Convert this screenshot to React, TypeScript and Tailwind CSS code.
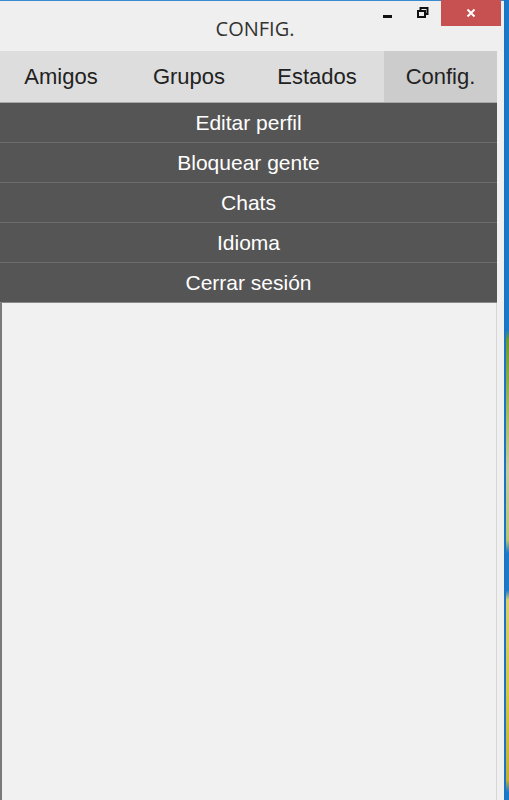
import React from 'react';

const tabs = ['Amigos', 'Grupos', 'Estados', 'Config.'];
const items = ['Editar perfil', 'Bloquear gente', 'Chats', 'Idioma', 'Cerrar sesión'];

const TitleBar: React.FC = () => {
  return (
    <div className="relative h-[51px] bg-[#efefef] border-t border-[#3a8ad0]">
      <div className="pt-[15px] text-center text-[20px] text-[#333] font-['Open_Sans',sans-serif] leading-[26px] pl-[6px]">
        CONFIG.
      </div>
      {/* window buttons */}
      <div className="absolute top-[-1px] right-[3px] flex items-start">
        <div className="w-[36px] h-[25px] flex items-center justify-center pt-[8px]">
          <div className="w-[9px] h-[3px] bg-[#111]" />
        </div>
        <div className="w-[36px] h-[25px] flex items-center justify-center">
          <svg width="12" height="11" viewBox="0 0 12 11">
            <rect x="3.5" y="1" width="7" height="6" fill="none" stroke="#111" strokeWidth="2" />
            <rect x="1" y="4" width="7" height="6" fill="#efefef" stroke="#111" strokeWidth="2" />
          </svg>
        </div>
        <div className="w-[60px] h-[26px] bg-[#c75050] flex items-center justify-center">
          <svg width="10" height="10" viewBox="0 0 10 10">
            <path d="M1.5 1.5 L8.5 8.5 M8.5 1.5 L1.5 8.5" stroke="#fff" strokeWidth="2" />
          </svg>
        </div>
      </div>
    </div>
  );
};

const App: React.FC = () => {
  return (
    <div className="flex w-[509px] h-[800px] overflow-hidden bg-[#f0f0f0]">
      <div className="w-[504px] flex flex-col">
        <TitleBar />
        <div className="flex flex-1 min-h-0">
          <div className="w-[497px] flex flex-col">
            <div className="flex h-[52px] bg-[#dddddd] border-b border-[#a8a8a8] font-['Liberation_Sans',Arial,sans-serif] text-[22px] text-[#222]">
              {tabs.map((t, i) => (
                <div
                  key={t}
                  className={`flex items-center justify-center ${i === 3 ? 'w-[113px] bg-[#cccccc]' : 'w-[128px] pr-[6px]'}`}
                >
                  {t}
                </div>
              ))}
            </div>
            <div className="flex-1 flex flex-col border-l-2 border-r border-l-[#7a7a7a] border-r-[#d6d6d6] bg-[#f1f1f1]">
              <div className="-ml-[2px] w-[497px] flex flex-col font-['Liberation_Sans',Arial,sans-serif] text-[21px] text-white">
                {items.map((it, i) => (
                  <div
                    key={it}
                    className={`h-[40px] flex items-center justify-center bg-[#555555] border-b ${i === items.length - 1 ? 'border-[#8a8a8a]' : 'border-[#6e6e6e]'}`}
                  >
                    {it}
                  </div>
                ))}
              </div>
            </div>
          </div>
          <div className="flex-1 bg-[#f0f0f0]" />
        </div>
      </div>
      <div className="flex-1 border-l-2 border-[#1a76c4] bg-[linear-gradient(to_bottom,#1a7ac8_0px,#1a7ac8_330px,#6e9a2a_340px,#a9c060_420px,#c6cca0_470px,#b8c870_540px,#1c7ac6_553px,#1c7ac6_590px,#d8d070_600px,#d4c838_700px,#c8b030_780px,#1a7ac8_792px)]" />
    </div>
  );
};

export default App;
